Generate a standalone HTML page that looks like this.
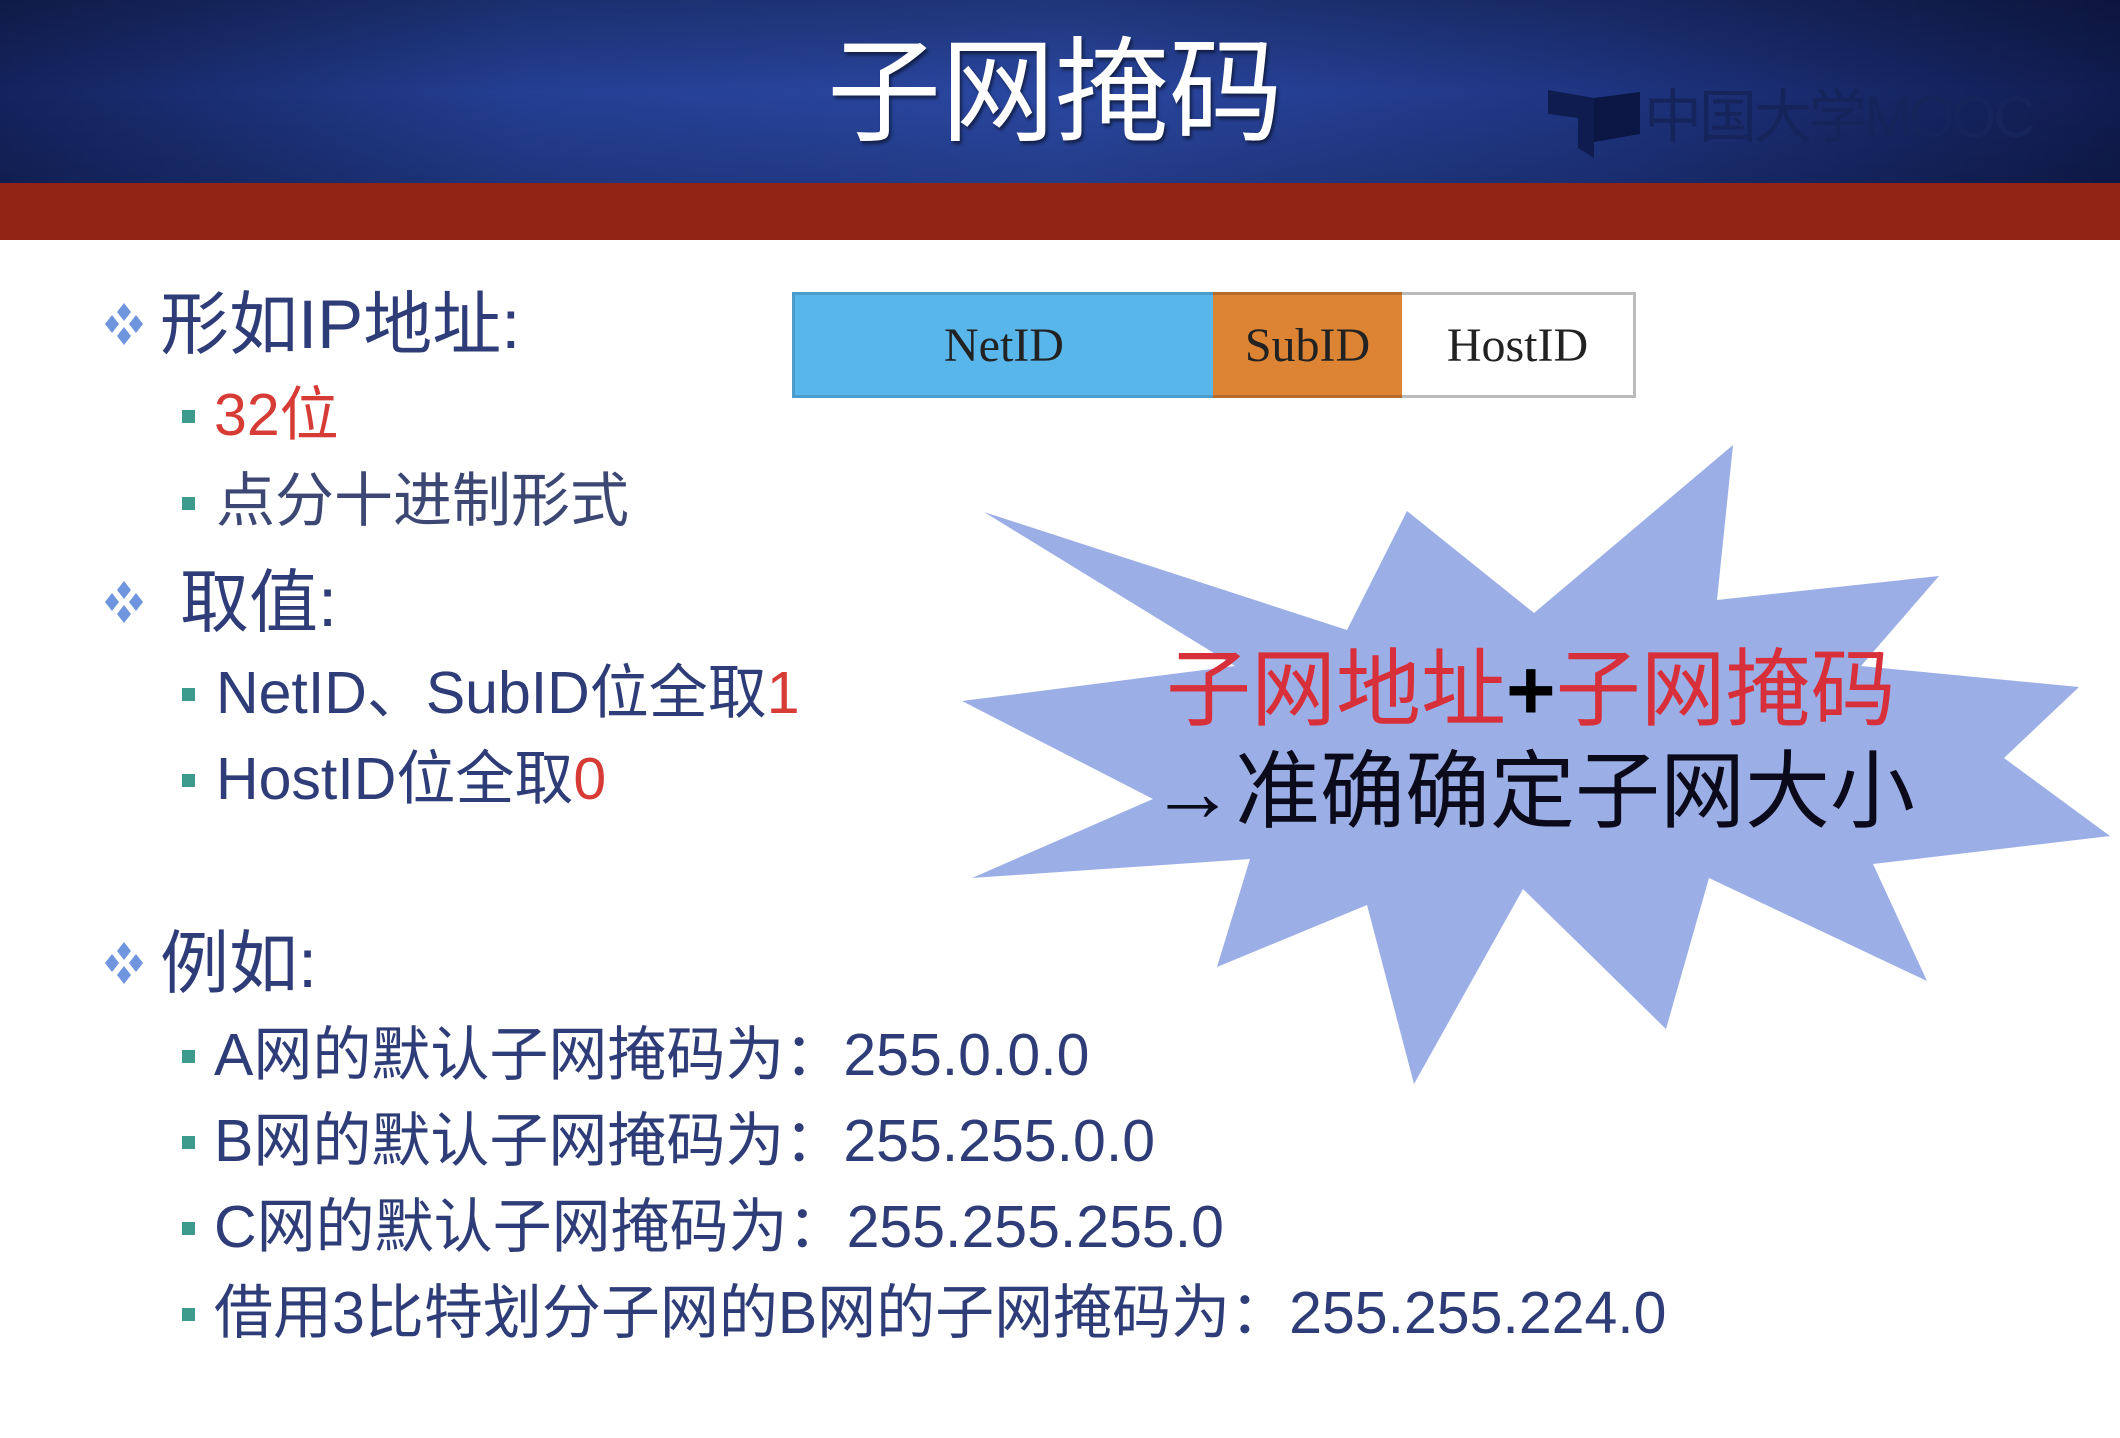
<!DOCTYPE html>
<html><head><meta charset="utf-8"><style>
html,body{margin:0;padding:0;width:2120px;height:1438px;overflow:hidden;background:#fff;}
body{position:relative;font-family:"Liberation Sans","Noto Sans CJK SC",sans-serif;}
.hdr{position:absolute;left:0;top:0;width:2120px;height:184px;background:linear-gradient(90deg,#14235e 0%,#243f93 25%,#2a47a0 50%,#1f3582 75%,#101c50 100%);}
.hdr:after{content:"";position:absolute;left:0;top:0;width:100%;height:100%;background:linear-gradient(180deg,rgba(0,0,0,.25),rgba(0,0,0,0) 50%,rgba(0,0,0,.15));}
.red{position:absolute;left:0;top:183px;width:2120px;height:57px;background:#922415;}
.title{position:absolute;left:0;width:2120px;top:18px;text-align:center;color:#fff;font-size:114px;line-height:130px;font-family:"Noto Sans CJK SC",sans-serif;letter-spacing:0px;z-index:2;text-shadow:2px 3px 3px rgba(0,0,0,.5);padding-right:10px;box-sizing:border-box;}
.logo{position:absolute;left:1548px;top:86px;z-index:2;color:#15245a;font-size:58px;line-height:64px;}
.t{position:absolute;white-space:nowrap;color:#2e3c78;line-height:1;}
.l1{font-size:69px;}
.l2{font-size:59px;}
.sq{position:absolute;width:13px;height:13px;background:#3d9b8d;}
.r{color:#d63b35;}
.box{position:absolute;top:292px;height:106px;box-sizing:border-box;font-family:"Liberation Serif",serif;font-size:48px;color:#222;display:flex;align-items:center;justify-content:center;}
</style></head><body>
<div class="hdr"></div>
<div class="red"></div>
<div class="title">子网掩码</div>
<div class="logo">
<svg width="92" height="70" style="position:absolute;left:0;top:2px"><polygon points="0,2 46,10 46,70 30,60 30,30 0,26" fill="#0f1c50"/><polygon points="46,10 92,4 92,46 46,54" fill="#0b1644"/></svg>
<span style="position:absolute;left:96px;top:0;white-space:nowrap;letter-spacing:-3px">中国大学MOOC</span></div>

<div class="box" style="left:792px;width:421px;background:#59b6ea;border:3px solid #4a9ccc;border-right:none">NetID</div>
<div class="box" style="left:1213px;width:189px;background:#dc8434;border:3px solid #b86a28;border-left:none;border-right:none">SubID</div>
<div class="box" style="left:1402px;width:234px;background:#fff;border:3px solid #bbb;border-left:none">HostID</div>

<svg style="position:absolute;left:0;top:0" width="2120" height="1438">
<defs><g id="d"><path d="M0,-9 L7,0 L0,9 L-7,0Z" fill="#6f95de"/></g>
<g id="dd"><use href="#d" x="0" y="-12"/><use href="#d" x="-12" y="0"/><use href="#d" x="12" y="0"/><use href="#d" x="0" y="12"/></g></defs>
<use href="#dd" x="124" y="324"/>
<use href="#dd" x="124" y="602"/>
<use href="#dd" x="124" y="963"/>
<polygon fill="#9caee6" points="984,512 1347,630 1407,511 1534,613 1733,445 1717,600 1939,576 1861,666 2079,687 2004,758 2110,836 1873,864 1927,981 1709,878 1666,1029 1523,889 1414,1084 1367,905 1217,967 1250,859 972,878 1153,799 962,701 1235,666"/>
</svg>

<div class="t l1" style="left:160px;top:290px">形如IP地址:</div>
<div class="sq" style="left:182px;top:410px"></div><div class="t l2 r" style="left:214px;top:386px">32位</div>
<div class="sq" style="left:182px;top:497px"></div><div class="t l2" style="left:216px;top:472px;color:#3d4774">点分十进制形式</div>
<div class="t l1" style="left:180px;top:568px">取值:</div>
<div class="sq" style="left:182px;top:688px"></div><div class="t l2" style="left:216px;top:664px">NetID、SubID位全取<span class="r">1</span></div>
<div class="sq" style="left:182px;top:774px"></div><div class="t l2" style="left:216px;top:750px">HostID位全取<span class="r">0</span></div>
<div class="t l1" style="left:160px;top:929px">例如:</div>
<div class="sq" style="left:182px;top:1050px"></div><div class="t l2" style="left:214px;top:1026px">A网的默认子网掩码为：255.0.0.0</div>
<div class="sq" style="left:182px;top:1136px"></div><div class="t l2" style="left:214px;top:1112px">B网的默认子网掩码为：255.255.0.0</div>
<div class="sq" style="left:182px;top:1222px"></div><div class="t l2" style="left:214px;top:1198px">C网的默认子网掩码为：255.255.255.0</div>
<div class="sq" style="left:182px;top:1308px"></div><div class="t l2" style="left:214px;top:1284px">借用3比特划分子网的B网的子网掩码为：255.255.224.0</div>

<div class="t" style="left:1166px;top:648px;font-size:85px;color:#d8303a">子网地址<b style="color:#000">+</b>子网掩码</div>
<div class="t" style="left:1150px;top:750px;font-size:85px;color:#0a0a1a">→准确确定子网大小</div>
</body></html>
